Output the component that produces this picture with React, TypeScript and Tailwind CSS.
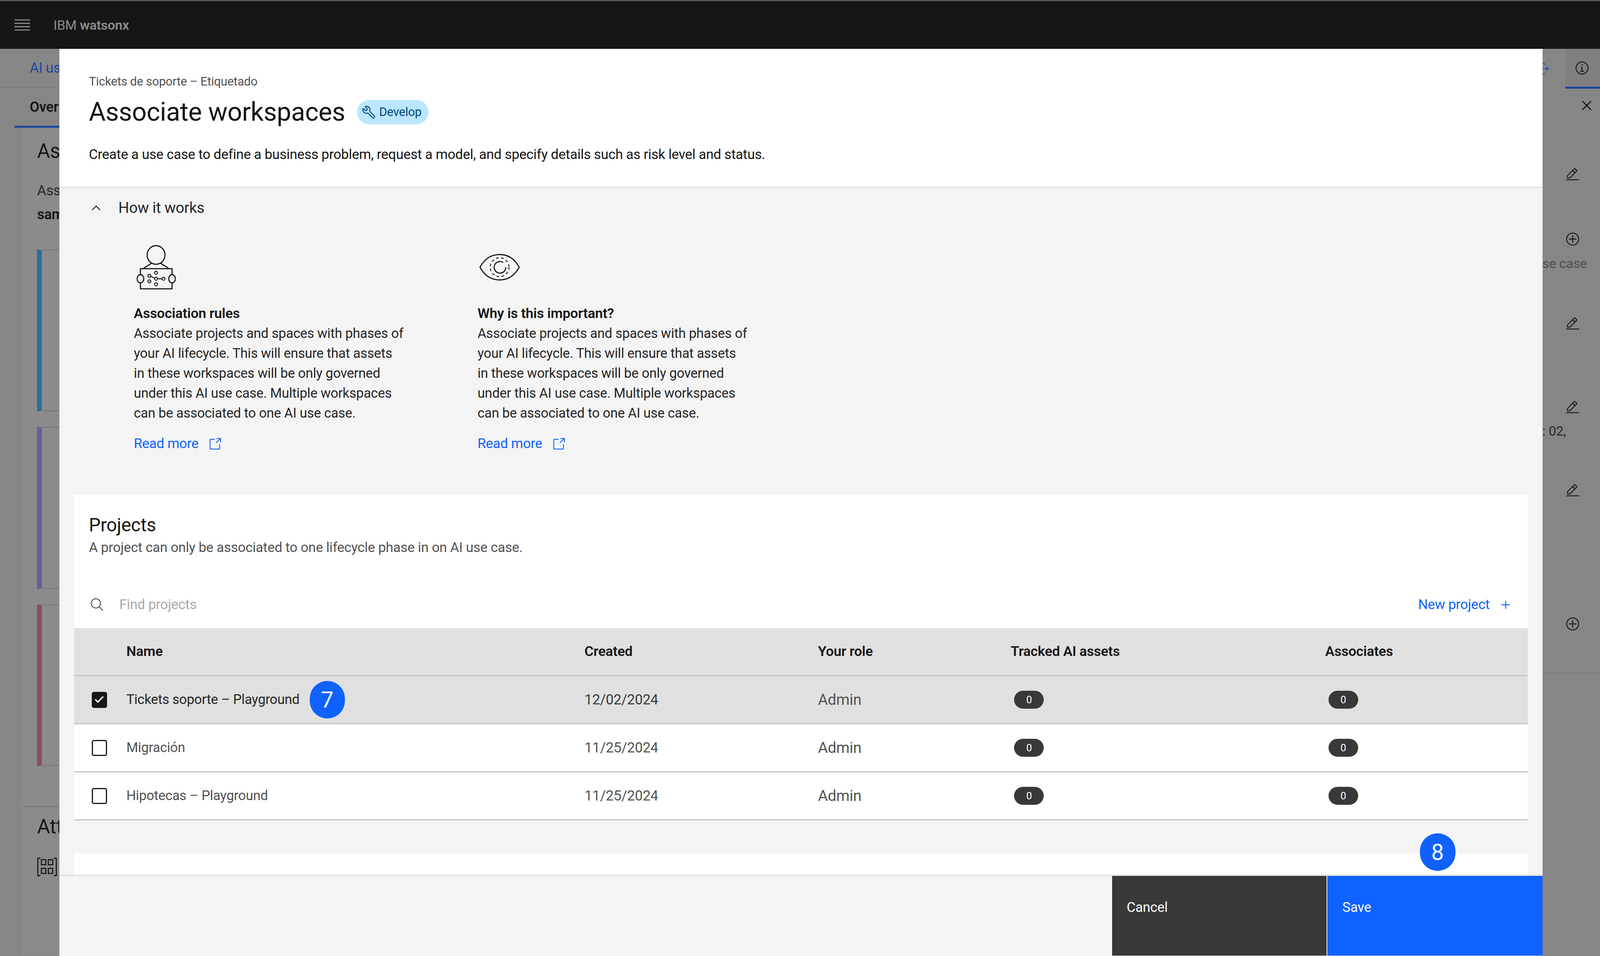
import { Check, Wrench } from 'lucide-react'

const PROJECTS = [
  { name: 'Tickets soporte – Playground', created: '12/02/2024', selected: true },
  { name: 'Migración', created: '11/25/2024', selected: false },
  { name: 'Hipotecas – Playground', created: '11/25/2024', selected: false },
]

const COPY = [
  'Associate projects and spaces with phases of',
  'your AI lifecycle. This will ensure that assets',
  'in these workspaces will be only governed',
  'under this AI use case. Multiple workspaces',
  'can be associated to one AI use case.',
]

function LaunchIcon() {
  return (
    <svg viewBox="0 0 32 32" className="w-[36px] h-[36px] fill-current">
      <path d="M26,28H6a2,2,0,0,1-2-2V6A2,2,0,0,1,6,4H16V6H6V26H26V16h2V26A2,2,0,0,1,26,28Z" />
      <path d="M20 2v2h6.586L18 12.586 19.414 14 28 5.414V12h2V2H20z" />
    </svg>
  )
}

function EditIcon() {
  return (
    <svg viewBox="0 0 32 32" className="w-[38px] h-[38px] fill-[#161616]">
      <path d="M2 26h28v2H2z" />
      <path d="M25.4 9c.8-.8.8-2 0-2.8l-3.6-3.6c-.8-.8-2-.8-2.8 0l-15 15V24h6.4l15-15zm-5-5L24 7.6l-3 3L17.4 7l3-3zM6 22v-3.6l10-10 3.6 3.6-10 10H6z" />
    </svg>
  )
}

function AddAltIcon() {
  return (
    <svg viewBox="0 0 32 32" className="w-[38px] h-[38px] fill-[#161616]">
      <path d="M16,4c6.6,0,12,5.4,12,12s-5.4,12-12,12S4,22.6,4,16S9.4,4,16,4 M16,2C8.3,2,2,8.3,2,16s6.3,14,14,14s14-6.3,14-14S23.7,2,16,2z" />
      <path d="M24 15h-7V8h-2v7H8v2h7v7h2v-7h7z" />
    </svg>
  )
}

function PersonIcon() {
  return (
    <svg viewBox="0 0 105 118" className="w-[100px] h-[114px] fill-none stroke-[#161616] stroke-[3]">
      <ellipse cx="52" cy="26" rx="24" ry="25" />
      <path d="M39 46c1 6-14 9-21 17M65 46c-1 6 14 9 21 17" />
      <rect x="10" y="63" width="85" height="54" />
      <ellipse cx="10" cy="90" rx="9" ry="11" fill="#f4f4f4" />
      <ellipse cx="95" cy="90" rx="9" ry="11" fill="#f4f4f4" />
      <path d="M34 82l18 8h20" strokeWidth="2.5" />
      <g strokeWidth="2.5" fill="#f4f4f4">
        <circle cx="52" cy="90" r="4" />
        <circle cx="72" cy="90" r="4" />
        <circle cx="52" cy="74" r="4" />
        <circle cx="34" cy="82" r="4" />
        <circle cx="34" cy="97" r="4" />
        <circle cx="52" cy="105" r="4" />
      </g>
    </svg>
  )
}

function EyeIcon() {
  return (
    <svg viewBox="0 0 112 74" className="w-[104px] h-[72px] fill-none stroke-[#161616] stroke-[3]">
      <path d="M2 37C16 11 36 2 56 2s40 9 54 35c-14 26-34 35-54 35S16 63 2 37Z" />
      <circle cx="56" cy="37" r="26" strokeDasharray="7 7" strokeWidth="2.5" />
      <path d="M66 24a16 16 0 1 0 7 13" />
    </svg>
  )
}

function HowItWorksCard({ title, icon }: { title: string; icon: React.ReactNode }) {
  return (
    <div className="w-[24.4%]">
      <div className="h-[118px] flex items-center">{icon}</div>
      <div className="mt-[34px] text-[35.5px] leading-[51px] font-semibold text-[#161616]">{title}</div>
      <div className="text-[34.5px] leading-[51px] text-[#262626] whitespace-nowrap">
        {COPY.map(line => <div key={line}>{line}</div>)}
      </div>
      <div className="mt-[28px] h-[51px] flex items-center gap-[24px] text-[35px] text-[#0f62fe]">
        <span>Read more</span>
        <LaunchIcon />
      </div>
    </div>
  )
}

function Pill() {
  return (
    <span className="flex items-center justify-center w-[76px] h-[46px] rounded-[23px] bg-[#393939] text-white text-[26px]">0</span>
  )
}

const TABLE_COLS = 'grid grid-cols-[3.6%_31.52%_16.06%_13.26%_21.64%_1fr] items-center h-[123px] border-b-[3px] border-[#c6c6c6]'

function ProjectRow({ name, created, selected }: { name: string; created: string; selected: boolean }) {
  return (
    <div className={`${TABLE_COLS} ${selected ? 'bg-[#e0e0e0]' : 'bg-white'}`}>
      <div className="pl-[45px]">
        {selected ? (
          <span className="flex items-center justify-center w-[39px] h-[41px] rounded-[5px] bg-[#161616]">
            <Check className="w-[28px] h-[28px] text-white" strokeWidth={3} />
          </span>
        ) : (
          <span className="block w-[39px] h-[41px] rounded-[5px] border-[3px] border-[#161616]" />
        )}
      </div>
      <div className="flex items-center gap-[26px]">
        <span className={`text-[34.5px] ${selected ? 'text-[#262626]' : 'text-[#525252]'}`}>{name}</span>
        {selected && (
          <span className="flex items-center justify-center w-[90px] h-[96px] rounded-full bg-[#0f62fe] text-white text-[58px]">7</span>
        )}
      </div>
      <span className={`text-[36px] ${selected ? 'text-[#393939]' : 'text-[#525252]'}`}>{created}</span>
      <span className="text-[39px] text-[#525252]">Admin</span>
      <div className="pl-[9px]"><Pill /></div>
      <div className="pl-[8px]"><Pill /></div>
    </div>
  )
}

function Modal() {
  return (
    <div className="absolute left-[3.7%] right-[3.6%] top-[125px] bottom-0 flex flex-col">
      <header className="h-[356px] shrink-0 bg-white border-b-[3px] border-[#e0e0e0] pl-[2%] pt-[62px]">
        <div className="text-[31px] leading-[44px] text-[#525252]">Tickets de soporte – Etiquetado</div>
        <div className="mt-[14px] flex items-center gap-[30px] h-[84px]">
          <h1 className="text-[66px] leading-[84px] text-[#161616]">Associate workspaces</h1>
          <span className="flex items-center gap-[9px] h-[62px] pl-[12px] pr-[18px] rounded-full bg-[#bae6ff] text-[#00437a] text-[31px]">
            <Wrench className="w-[36px] h-[36px] -scale-x-100" strokeWidth={1.6} />
            Develop
          </span>
        </div>
        <p className="mt-[41px] text-[35px] leading-[51px] text-[#161616]">
          Create a use case to define a business problem, request a model, and specify details such as risk level and status.
        </p>
      </header>

      <div className="flex-1 min-h-0 overflow-hidden bg-[#f4f4f4]">
        <div className="h-[102px] flex items-center pl-[2.2%] gap-[46px]">
          <svg viewBox="0 0 24 24" className="w-[22px] h-[24px] fill-none stroke-[#161616] stroke-[2.5]">
            <path d="M1 18 12 7l11 11" />
          </svg>
          <span className="text-[38.7px] text-[#262626]">How it works</span>
        </div>
        <div className="pl-[5.03%] pt-[42px] flex">
          <HowItWorksCard title="Association rules" icon={<div className="ml-[7px]"><PersonIcon /></div>} />
          <HowItWorksCard title="Why is this important?" icon={<div className="ml-[5px]"><EyeIcon /></div>} />
        </div>

        <section className="mt-[105px] mx-[1%] bg-white">
          <div className="pl-[38px] pt-[42px]">
            <h2 className="text-[47.5px] leading-[70px] text-[#161616]">Projects</h2>
            <p className="text-[35px] leading-[46px] text-[#525252]">A project can only be associated to one lifecycle phase in on AI use case.</p>
          </div>
          <div className="mt-[63px] h-[120px] flex items-center justify-between pl-[40px] pr-[46px]">
            <div className="flex items-center gap-[38px]">
              <svg viewBox="0 0 32 32" className="w-[38px] h-[38px] fill-[#525252]">
                <path d="M29,27.5859l-7.5521-7.5521a11.0177,11.0177,0,1,0-1.4141,1.4141L27.5859,29ZM4,13a9,9,0,1,1,9,9A9.01,9.01,0,0,1,4,13Z" />
              </svg>
              <span className="text-[35px] text-[#a8a8a8]">Find projects</span>
            </div>
            <div className="flex items-center gap-[30px] text-[35px] text-[#0f62fe]">
              <span>New project</span>
              <svg viewBox="0 0 22 22" className="w-[21px] h-[22px] fill-none stroke-current stroke-[2.5]">
                <path d="M11 0v22M0 11h22" />
              </svg>
            </div>
          </div>
          <div className={`${TABLE_COLS} bg-[#e0e0e0] text-[35.5px] font-semibold text-[#161616]`}>
            <span />
            <span>Name</span>
            <span>Created</span>
            <span>Your role</span>
            <span>Tracked AI assets</span>
            <span>Associates</span>
          </div>
          {PROJECTS.map(p => <ProjectRow key={p.name} {...p} />)}
        </section>

        <div className="mt-[85px] mx-[1%] h-[60px] bg-white" />
      </div>

      <footer className="h-[208px] shrink-0 bg-[#f4f4f4] border-t-[3px] border-[#e0e0e0] pb-[1px] flex justify-end gap-[2px] text-[35px] leading-[51px] text-white">
        <div className="w-[14.44%] bg-[#393939] pl-[37px] pt-[55px]">Cancel</div>
        <div className="w-[14.51%] bg-[#0f62fe] pl-[39px] pt-[55px]">Save</div>
      </footer>

      <span className="absolute right-[5.87%] top-[2008px] flex items-center justify-center w-[91px] h-[96px] rounded-full bg-[#0f62fe] text-white text-[58px]">8</span>
    </div>
  )
}

function BackgroundLeft() {
  return (
    <div className="w-[3.7%] whitespace-nowrap">
      <div className="h-[101px] flex items-center pl-[76px] border-b-[3px] border-[#7c7c7c] text-[36px] text-[#1c47a0]">AI us</div>
      <div className="pl-[37px]">
        <div className="h-[101px] flex items-center pl-[39px] border-b-[5px] border-[#1c47a0] text-[36px] font-semibold text-[#161616]">Over</div>
      </div>
      <div className="ml-[57px] pl-[38px] bg-[#8b8b8b] h-[2119px]">
        <div className="pt-[30px] text-[51px] leading-[60px] text-[#161616]">As</div>
        <div className="mt-[46px] text-[36px] leading-[50px] text-[#262626]">Ass</div>
        <div className="mt-[11px] text-[36px] leading-[50px] font-semibold text-[#161616]">sam</div>
        <div className="mt-[64px] h-[415px] border-l-[12px] border-l-[#2c6e9b] border-y-[3px] border-y-[#7c7c7c]" />
        <div className="mt-[39px] h-[416px] border-l-[12px] border-l-[#6c5b95] border-y-[3px] border-y-[#7c7c7c]" />
        <div className="mt-[39px] h-[414px] border-l-[12px] border-l-[#8f4b6a] border-y-[3px] border-y-[#7c7c7c]" />
        <div className="mt-[102px] -ml-[38px] pl-[38px] border-t-[3px] border-[#7c7c7c]">
          <div className="mt-[20px] text-[51px] leading-[60px] text-[#161616]">Att</div>
          <svg viewBox="0 0 55 52" className="mt-[47px] w-[51px] h-[52px] fill-none stroke-[#161616] stroke-[3]">
            <path d="M9 2H2v48h7M46 2h7v48h-7" />
            <rect x="12" y="6" width="12" height="14" />
            <rect x="31" y="6" width="12" height="14" />
            <rect x="12" y="30" width="12" height="14" />
            <rect x="31" y="30" width="12" height="14" />
          </svg>
        </div>
      </div>
    </div>
  )
}

function BackgroundRight() {
  return (
    <div className="w-[3.6%] overflow-hidden whitespace-nowrap text-[#262626] text-[34px]">
      <div className="h-[102px] flex">
        <div className="w-[58px] flex items-center justify-start">
          <svg viewBox="0 0 18 34" className="w-[17px] h-[34px] fill-none stroke-[#1c47a0] stroke-[2]">
            <path d="M0 17h16M10 11l6 6-6 6M0 2h4l3 4M0 32h4l2-3" />
          </svg>
        </div>
        <div className="flex-1 bg-[#7f7f7f] border-b-[5px] border-[#1c47a0] flex items-center pl-[24px]">
          <svg viewBox="0 0 32 32" className="w-[38px] h-[38px] fill-[#161616]">
            <path d="M17 22v-8h-4v2h2v6h-3v2h8v-2h-3z" />
            <path d="M16 8a1.5 1.5 0 1 0 1.5 1.5A1.5 1.5 0 0 0 16 8z" />
            <path d="M16 30a14 14 0 1 1 14-14 14 14 0 0 1-14 14zm0-26a12 12 0 1 0 12 12A12 12 0 0 0 16 4z" />
          </svg>
        </div>
      </div>
      <div className="pl-[58px]">
        <div className="flex justify-end pr-[21px] pt-[29px]">
          <svg viewBox="0 0 28 28" className="w-[26px] h-[28px] fill-none stroke-[#161616] stroke-[3]">
            <path d="M2 2l24 24M26 2 2 26" />
          </svg>
        </div>
        <div className="mt-[144px] flex flex-col">
          <EditIcon />
          <div className="mt-[127px]"><AddAltIcon /></div>
        </div>
      </div>
      <div className="leading-[50px] mt-[18px] text-[#4d4d4d]">se case</div>
      <div className="pl-[58px]">
        <div className="mt-[111px]"><EditIcon /></div>
        <div className="mt-[176px]"><EditIcon /></div>
      </div>
      <div className="leading-[50px] mt-[16px]">: 02,</div>
      <div className="pl-[58px]">
        <div className="mt-[109px]"><EditIcon /></div>
        <div className="mt-[303px]"><AddAltIcon /></div>
      </div>
      <div className="mt-[106px] border-t-[3px] border-[#7c7c7c]" />
    </div>
  )
}

export default function App() {
  return (
    <div className="relative w-full h-screen overflow-hidden bg-[#868686] tracking-[-0.018em] font-['Roboto',sans-serif]">
      <div className="h-[125px] flex items-center gap-[60px] pl-[37px] bg-[#161616] border-t-[3px] border-[#5a5a5a]">
        <svg viewBox="0 0 42 30" className="w-[40px] h-[30px] fill-[#8d8d8d]">
          <path d="M0 0h42v3H0zM0 9h42v3H0zM0 18h42v3H0zM0 27h42v3H0z" />
        </svg>
        <span className="text-[34px] text-[#8d8d8d]">IBM <span className="font-semibold">watsonx</span></span>
      </div>
      <div className="flex justify-between">
        <BackgroundLeft />
        <BackgroundRight />
      </div>
      <Modal />
    </div>
  )
}
